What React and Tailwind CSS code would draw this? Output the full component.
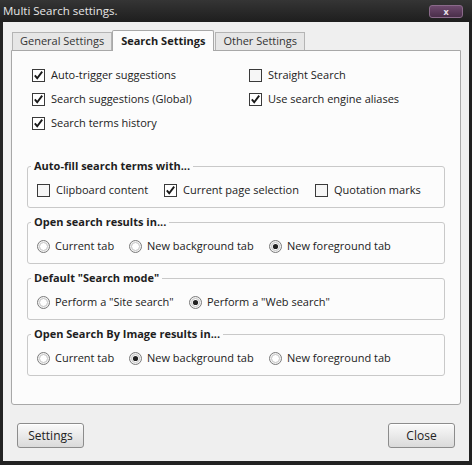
import React from 'react';

const font = { fontFamily: '"Open Sans", "DejaVu Sans", sans-serif' };

function CheckBox({ checked }) {
  return (
    <svg width="13" height="13" viewBox="0 0 13 13" className="shrink-0">
      <rect x="0.5" y="0.5" width="12" height="12" fill={checked ? '#ffffff' : '#f6f6f6'} stroke="#3a3a3a" />
      {checked && <path d="M2.8 6.4 L5.2 9.2 L10.2 2.6" fill="none" stroke="#1a1a1a" strokeWidth="1.9" />}
    </svg>
  );
}

function Radio({ checked }) {
  return (
    <svg width="13" height="13" viewBox="0 0 13 13" className="shrink-0">
      <circle cx="6.5" cy="6.5" r="6" fill="#f2f2f2" stroke="#7a7a7a" />
      <circle cx="6.5" cy="6.5" r="4" fill="#ffffff" stroke="#c4c4c4" />
      {checked && <circle cx="6.5" cy="6.5" r="2.6" fill="#222222" />}
    </svg>
  );
}

function CheckItem({ checked, label, className = '' }) {
  return (
    <div className={`flex h-[16px] items-center ${className}`}>
      <CheckBox checked={checked} />
      <span className="ml-[6px] whitespace-nowrap">{label}</span>
    </div>
  );
}

function RadioItem({ checked, label, className = '' }) {
  return (
    <div className={`flex h-[16px] items-center ${className}`}>
      <Radio checked={checked} />
      <span className="ml-[5px] whitespace-nowrap">{label}</span>
    </div>
  );
}

function Group({ title, children }) {
  return (
    <fieldset className="rounded-[3px] border border-[#c9c9c9] px-[9px] pb-[9px] pt-[8px]">
      <legend className="-ml-[6px] px-[3px] text-[11px] font-bold leading-[16px] text-[#1e1e1e]">{title}</legend>
      <div className="flex items-center">{children}</div>
    </fieldset>
  );
}

function Tab({ label, active }) {
  if (active) {
    return (
      <div className="relative z-10 -mb-px flex h-[21px] items-center rounded-t-[2px] border border-b-0 border-[#a8a8a8] bg-[#fcfcfc] px-[8px] text-[11px] font-bold text-[#1e1e1e]">
        {label}
      </div>
    );
  }
  return (
    <div className="mt-[2px] flex h-[18px] items-center border border-b-0 border-[#b4b4b4] bg-[#e6e6e6] px-[7px] text-[11px] text-[#333333]">
      {label}
    </div>
  );
}

function Button({ children }) {
  return (
    <button
      type="button"
      className="flex h-[25px] w-[67px] items-center justify-center rounded-[3px] border border-[#8c8c8c] bg-gradient-to-b from-[#fafafa] to-[#dadada] text-[12px] text-[#222222] shadow-[inset_0_1px_0_#ffffff]"
    >
      {children}
    </button>
  );
}

export default function App() {
  return (
    <div className="flex h-[465px] w-[472px] flex-col bg-[#222222] text-[11px] text-[#222222]" style={font}>
      <div className="flex h-[22px] items-center justify-between bg-gradient-to-b from-[#353535] to-[#1e1e1e] pl-[3px] pr-[9px]">
        <span className="text-[11.5px] text-[#e6e6e6]">Multi Search settings.</span>
        <div className="flex h-[13px] w-[34px] items-center justify-center rounded-[3px] border border-[#8a6a8a] bg-gradient-to-b from-[#6e4a6e] to-[#4a2e4a]">
          <span className="text-[9px] font-bold leading-none text-[#e8e0e8]">x</span>
        </div>
      </div>

      <div className="mx-[3px] mb-[4px] flex flex-1 flex-col bg-[#efefef] px-[8px] pt-[8px]">
        <div className="flex items-end pl-[1px]">
          <Tab label="General Settings" />
          <Tab label="Search Settings" active />
          <div className="ml-[1px]">
            <Tab label="Other Settings" />
          </div>
        </div>

        <div className="h-[355px] rounded-b-[3px] border border-[#a8a8a8] bg-[#fcfcfc] px-[15px] pt-[16px]">
          <div className="grid grid-cols-[217px_auto] gap-y-[8px] pl-[5px]">
            <CheckItem checked label="Auto-trigger suggestions" />
            <CheckItem label="Straight Search" />
            <CheckItem checked label="Search suggestions (Global)" />
            <CheckItem checked label="Use search engine aliases" />
            <CheckItem checked label="Search terms history" />
          </div>

          <div className="mt-[27px] flex flex-col gap-[6px]">
            <Group title="Auto-fill search terms with...">
              <CheckItem label="Clipboard content" className="w-[127px]" />
              <CheckItem checked label="Current page selection" className="w-[151px]" />
              <CheckItem label="Quotation marks" />
            </Group>
            <Group title="Open search results in...">
              <RadioItem label="Current tab" className="w-[92px]" />
              <RadioItem label="New background tab" className="w-[140px]" />
              <RadioItem checked label="New foreground tab" />
            </Group>
            <Group title={'Default "Search mode"'}>
              <RadioItem label={'Perform a "Site search"'} className="w-[152px]" />
              <RadioItem checked label={'Perform a "Web search"'} />
            </Group>
            <Group title="Open Search By Image results in...">
              <RadioItem label="Current tab" className="w-[92px]" />
              <RadioItem checked label="New background tab" className="w-[140px]" />
              <RadioItem label="New foreground tab" />
            </Group>
          </div>
        </div>

        <div className="flex justify-between px-[6px] pt-[18px]">
          <Button>Settings</Button>
          <Button>Close</Button>
        </div>
      </div>
    </div>
  );
}
